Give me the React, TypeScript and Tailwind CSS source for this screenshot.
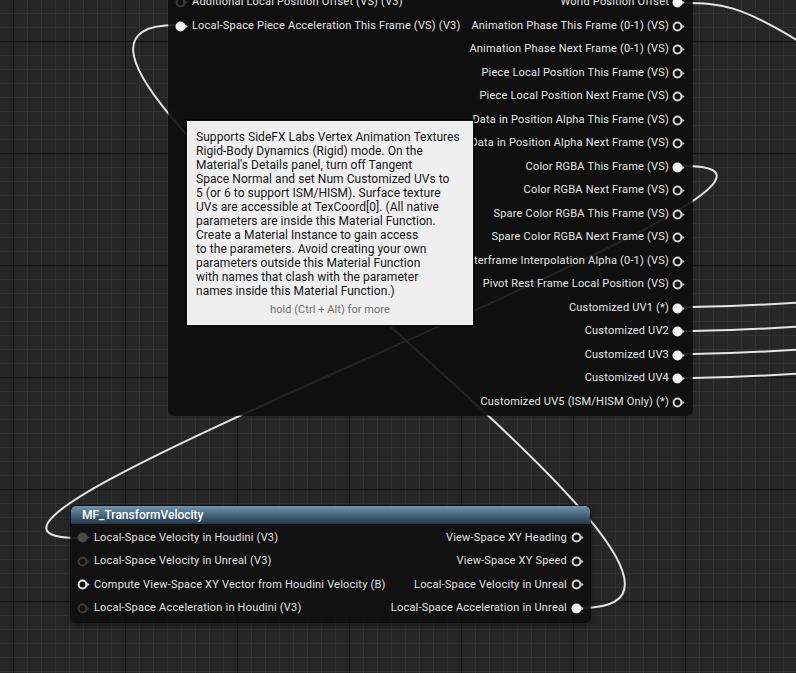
import React from 'react';

type PinKind = 'filled' | 'hollow';

function Pin({ kind, color }: { kind: PinKind; color: string }) {
  return (
    <svg width="13" height="11" viewBox="0 0 13 11" className="shrink-0">
      {kind === 'filled' ? (
        <circle cx="5.5" cy="5.5" r="5" fill={color} />
      ) : (
        <circle cx="5.5" cy="5.5" r="3.9" fill="none" stroke={color} strokeWidth="2" />
      )}
      <path d="M10.3 3.6 L12.6 5.5 L10.3 7.4 Z" fill={color} />
    </svg>
  );
}

const rightRows: [string, PinKind][] = [
  ['World Position Offset', 'filled'],
  ['Animation Phase This Frame (0-1) (VS)', 'hollow'],
  ['Animation Phase Next Frame (0-1) (VS)', 'hollow'],
  ['Piece Local Position This Frame (VS)', 'hollow'],
  ['Piece Local Position Next Frame (VS)', 'hollow'],
  ['Data in Position Alpha This Frame (VS)', 'hollow'],
  ['Data in Position Alpha Next Frame (VS)', 'hollow'],
  ['Color RGBA This Frame (VS)', 'filled'],
  ['Color RGBA Next Frame (VS)', 'hollow'],
  ['Spare Color RGBA This Frame (VS)', 'hollow'],
  ['Spare Color RGBA Next Frame (VS)', 'hollow'],
  ['Interframe Interpolation Alpha (0-1) (VS)', 'hollow'],
  ['Pivot Rest Frame Local Position (VS)', 'hollow'],
  ['Customized UV1 (*)', 'filled'],
  ['Customized UV2', 'filled'],
  ['Customized UV3', 'filled'],
  ['Customized UV4', 'filled'],
  ['Customized UV5 (ISM/HISM Only) (*)', 'hollow'],
];

const tooltipLines = [
  'Supports SideFX Labs Vertex Animation Textures',
  'Rigid-Body Dynamics (Rigid) mode. On the',
  "Material's Details panel, turn off Tangent",
  'Space Normal and set Num Customized UVs to',
  '5 (or 6 to support ISM/HISM). Surface texture',
  'UVs are accessible at TexCoord[0]. (All native',
  'parameters are inside this Material Function.',
  'Create a Material Instance to gain access',
  'to the parameters. Avoid creating your own',
  'parameters outside this Material Function',
  'with names that clash with the parameter',
  'names inside this Material Function.)',
];

function Grid() {
  const vx: number[] = [];
  for (let x = 13.5 - 14; x < 800; x += 14) vx.push(x);
  const hy: number[] = [];
  for (let y = 41 - 14 * 3; y < 680; y += 14) hy.push(y);
  const isMajorX = (x: number) => Math.abs(((x - 13.5) / 14) % 8) < 0.01;
  const isMajorY = (y: number) => Math.abs(((y - 41) / 14) % 8) < 0.01;
  return (
    <svg className="absolute inset-0" width="796" height="673">
      <rect width="796" height="673" fill="#262626" />
      {vx.filter((x) => !isMajorX(x)).map((x) => (
        <line key={'v' + x} x1={x} y1={0} x2={x} y2={673} stroke="#313131" strokeWidth="1" />
      ))}
      {hy.filter((y) => !isMajorY(y)).map((y) => (
        <line key={'h' + y} x1={0} y1={y + 0.5} x2={796} y2={y + 0.5} stroke="#313131" strokeWidth="1" />
      ))}
      {vx.filter(isMajorX).map((x) => (
        <line key={'V' + x} x1={x} y1={0} x2={x} y2={673} stroke="#151515" strokeWidth="1" />
      ))}
      {hy.filter(isMajorY).map((y) => (
        <line key={'H' + y} x1={0} y1={y + 0.5} x2={796} y2={y + 0.5} stroke="#151515" strokeWidth="1" />
      ))}
    </svg>
  );
}

function Wires() {
  const w = '#e4e4e4';
  return (
    <svg className="absolute inset-0" width="796" height="673" fill="none">
      <path d="M685 3 C 720 3, 740 5, 800 42" stroke={w} strokeWidth="2" />
      <path d="M684 307 C 720 307, 760 305, 800 302.5" stroke={w} strokeWidth="2" />
      <path d="M684 331 C 720 331, 760 329, 800 326.5" stroke={w} strokeWidth="2" />
      <path d="M684 354 C 720 354, 760 352, 800 349.5" stroke={w} strokeWidth="2" />
      <path d="M684 378 C 720 378, 760 376, 800 373.5" stroke={w} strokeWidth="2" />
      <path d="M684 166 C 914 166, -151 538, 79 538" stroke={w} strokeWidth="2" />
      <path d="M582 608 C 827 608, -69 25, 176 25" stroke={w} strokeWidth="2" />
    </svg>
  );
}

export default function App() {
  const font = { fontFamily: 'Roboto, "Noto Sans", Arial, sans-serif' };
  return (
    <div className="relative w-[796px] h-[673px] overflow-hidden bg-[#262626]" style={font}>
      <Grid />
      <Wires />

      {/* Main material function node */}
      <div className="absolute left-[169px] top-[-9.25px] w-[523px] pb-[1px] rounded-b-[5px] bg-[rgba(13,13,13,0.9)] shadow-[0_0_0_1px_rgba(0,0,0,0.6)] flex text-[11px] tracking-[0.2px] text-[#e6e6e6]">
        <div className="flex flex-col flex-1 min-w-0">
          <div className="h-[23.5px] flex items-center pl-[6px] gap-[4px] whitespace-nowrap">
            <Pin kind="hollow" color="#3e3e3e" />
            <span>Additional Local Position Offset (VS) (V3)</span>
          </div>
          <div className="h-[23.5px] flex items-center pl-[6px] gap-[4px] whitespace-nowrap">
            <Pin kind="filled" color="#f2f2f2" />
            <span>Local-Space Piece Acceleration This Frame (VS) (V3)</span>
          </div>
        </div>
        <div className="flex flex-col items-end shrink-0">
          {rightRows.map(([label, kind]) => (
            <div key={label} className="h-[23.5px] flex items-center pr-[7px] gap-[3px] whitespace-nowrap">
              <span>{label}</span>
              <Pin kind={kind} color={kind === 'filled' ? '#f2f2f2' : '#d4d4d4'} />
            </div>
          ))}
        </div>
      </div>

      {/* Tooltip */}
      <div className="absolute left-[186px] top-[120px] w-[288px] h-[206px] bg-[#efefef] border border-[#111] shadow-[0_0_0_1px_rgba(0,0,0,0.5)] pt-[9px] pl-[9px] text-[12px] leading-[14px] tracking-[0.05px] text-[#161616]">
        {tooltipLines.map((l) => (
          <div key={l} className="whitespace-nowrap">{l}</div>
        ))}
        <div className="mt-[5px] pr-[9px] text-center text-[11px] leading-[14px] text-[#6e6e6e]">hold (Ctrl + Alt) for more</div>
      </div>

      {/* MF_TransformVelocity node */}
      <div className="absolute left-[71px] top-[506px] w-[519px] rounded-[5px] bg-[rgba(15,15,15,0.92)] shadow-[0_0_0_1px_rgba(0,0,0,0.55),0_2px_6px_rgba(0,0,0,0.5)] text-[11px] tracking-[0.2px] text-[#e0e0e0] pb-[2px]">
        <div className="h-[19px] rounded-t-[5px] bg-gradient-to-b from-[#7394ab] via-[#46667f] to-[#24384b] border-b border-[#0c0c0c] flex items-center pl-[11px] text-[12px] tracking-normal font-medium text-white">
          MF_TransformVelocity
        </div>
        <div className="pt-[1px] flex justify-between">
          <div className="flex flex-col">
            <div className="h-[23.5px] flex items-center pl-[6px] gap-[4px] whitespace-nowrap">
              <Pin kind="filled" color="#4a4a4a" />
              <span>Local-Space Velocity in Houdini (V3)</span>
            </div>
            <div className="h-[23.5px] flex items-center pl-[6px] gap-[4px] whitespace-nowrap">
              <Pin kind="hollow" color="#3c3c3c" />
              <span>Local-Space Velocity in Unreal (V3)</span>
            </div>
            <div className="h-[23.5px] flex items-center pl-[6px] gap-[4px] whitespace-nowrap">
              <Pin kind="hollow" color="#e6e6e6" />
              <span>Compute View-Space XY Vector from Houdini Velocity (B)</span>
            </div>
            <div className="h-[23.5px] flex items-center pl-[6px] gap-[4px] whitespace-nowrap">
              <Pin kind="hollow" color="#3c3c3c" />
              <span>Local-Space Acceleration in Houdini (V3)</span>
            </div>
          </div>
          <div className="flex flex-col items-end">
            {([
              ['View-Space XY Heading', 'hollow'],
              ['View-Space XY Speed', 'hollow'],
              ['Local-Space Velocity in Unreal', 'hollow'],
              ['Local-Space Acceleration in Unreal', 'filled'],
            ] as [string, PinKind][]).map(([label, kind]) => (
              <div key={label} className="h-[23.5px] flex items-center pr-[6px] gap-[4px] whitespace-nowrap">
                <span>{label}</span>
                <Pin kind={kind} color={kind === 'filled' ? '#f2f2f2' : '#d4d4d4'} />
              </div>
            ))}
          </div>
        </div>
      </div>
    </div>
  );
}
